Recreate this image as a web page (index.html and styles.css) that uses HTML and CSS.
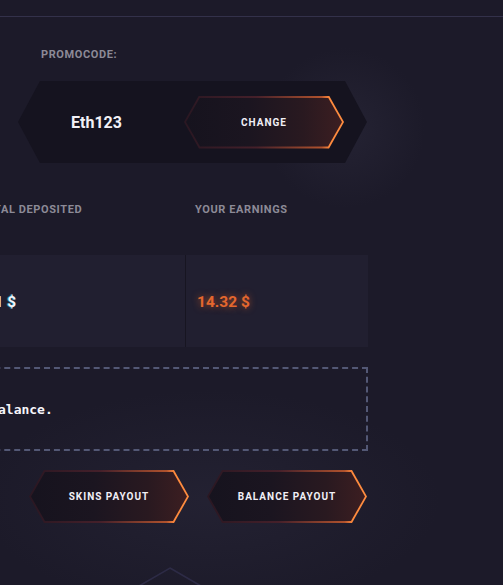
FILE: index.html
```html
<!DOCTYPE html>
<html lang="en">
<head>
<meta charset="utf-8">
<title>Referral program</title>
<link rel="stylesheet" href="styles.css">
</head>
<body>
  <header class="topbar"></header>

  <main class="referral">
    <section class="row-top">
      <div class="promo">
        <p class="label promo-label">Promocode:</p>
        <div class="promo-field">
          <span class="promo-code">Eth123</span>
          <button class="hex-btn" type="button">Change</button>
        </div>
      </div>
    </section>

    <section class="stats">
      <div class="stats-labels">
        <p class="label stat-label">Total deposited</p>
        <p class="label stat-label">Your earnings</p>
      </div>
      <div class="stats-values">
        <div class="stat-value deposited">0.1 $</div>
        <div class="stat-value earnings">14.32 $</div>
      </div>
    </section>

    <div class="notice">You can withdraw your earnings as skins or to your balance.</div>

    <div class="payouts">
      <button class="hex-btn" type="button">Skins payout</button>
      <button class="hex-btn" type="button">Balance payout</button>
    </div>
  </main>

  <div class="next-section">
    <svg class="hex-outline" width="64" height="72" viewBox="0 0 64 72">
      <polygon points="32,1 63,19 63,53 32,71 1,53 1,19" fill="none" stroke="#2d2b46" stroke-width="1.5"/>
    </svg>
  </div>
</body>
</html>
```

FILE: styles.css
```css
* {
  box-sizing: border-box;
}

body {
  margin: 0;
  color: #fff;
  font-family: Roboto, "Liberation Sans", sans-serif;
  background:
    radial-gradient(circle at 345px 128px, rgba(44, 42, 60, 0.55) 0, rgba(28, 26, 41, 0) 80px),
    radial-gradient(ellipse 230px 110px at 210px 500px, rgba(40, 38, 56, 0.6), rgba(28, 26, 41, 0)),
    #1c1a29;
  overflow: hidden;
}

.topbar {
  height: 17px;
  border-bottom: 1px solid #33314a;
}

/* the referral card is wider than the window and runs off its left side */
.referral {
  width: 801px;
  margin-left: -433px;
  padding-top: 31px;
}

.label {
  margin: 0;
  font-size: 11px;
  line-height: 13px;
  font-weight: 700;
  letter-spacing: 0.6px;
  text-transform: uppercase;
  color: #8c8a97;
}

/* ---- promocode ---- */
.row-top {
  display: flex;
  justify-content: flex-end;
}

.promo {
  width: 350px;
}

.promo-label {
  padding-left: 23px;
}

.promo-field {
  margin-top: 20px;
  width: 349px;
  height: 82px;
  display: flex;
  align-items: center;
  justify-content: space-between;
  padding: 0 23px 0 53px;
  background: #15131f;
  clip-path: polygon(22px 0, calc(100% - 22px) 0, 100% 50%, calc(100% - 22px) 100%, 22px 100%, 0 50%);
}

.promo-code {
  padding-top: 1px;
  font-size: 16px;
  font-weight: 700;
  color: #f2f1f6;
}

/* ---- hexagonal button with gradient outline ---- */
.hex-btn {
  position: relative;
  isolation: isolate;
  width: 160px;
  height: 53px;
  padding: 0;
  border: 0;
  display: inline-flex;
  align-items: center;
  justify-content: center;
  font-family: Roboto, "Liberation Sans", sans-serif;
  font-size: 10px;
  font-weight: 700;
  letter-spacing: 1px;
  text-transform: uppercase;
  color: #f1eff6;
  cursor: pointer;
  background: linear-gradient(90deg, #2a1722 0%, #45202a 45%, #b0522d 86%, #ff8a3d 91%, #ff8d40 100%);
  clip-path: polygon(15px 0, calc(100% - 15px) 0, 100% 50%, calc(100% - 15px) 100%, 15px 100%, 0 50%);
}

.hex-btn::before {
  content: "";
  position: absolute;
  inset: 2px;
  z-index: -1;
  background: linear-gradient(90deg, #16131e 0%, #1b1520 40%, #291920 75%, #3c1e21 100%);
  clip-path: polygon(14px 0, calc(100% - 14px) 0, 100% 50%, calc(100% - 14px) 100%, 14px 100%, 0 50%);
}

/* ---- stats ---- */
.stats {
  margin-top: 40px;
  margin-left: 403px;
}

.stats-labels,
.stats-values {
  display: grid;
  grid-template-columns: 1fr 182px;
  column-gap: 1px;
}

.stat-label {
  padding-left: 9px;
}

.stats-values {
  margin-top: 39px;
  height: 92px;
  background: #171521;
}

.stat-value {
  display: flex;
  align-items: center;
  padding: 2px 0 0 11px;
  background: #211f30;
  font-size: 15.5px;
  font-weight: 700;
  color: #f4f3f8;
}

.deposited {
  text-shadow: -1px 0 1px rgba(40, 190, 255, 0.85);
}

.earnings {
  color: #e4672e;
  text-shadow: 0 0 7px rgba(232, 102, 40, 0.65);
}

/* ---- notice ---- */
.notice {
  margin-top: 20px;
  height: 84px;
  display: flex;
  align-items: center;
  padding-left: 22px;
  border: 2px dashed #535875;
  font-family: "DejaVu Sans Mono", "Liberation Mono", monospace;
  font-size: 13px;
  font-weight: 700;
  color: #f6f5fa;
}

/* ---- payout buttons ---- */
.payouts {
  margin-top: 19px;
  display: flex;
  justify-content: flex-end;
  gap: 18px;
  padding-right: 1px;
}

.next-section {
  margin-top: 44px;
  padding-left: 138px;
}

.hex-outline {
  display: block;
}
```
